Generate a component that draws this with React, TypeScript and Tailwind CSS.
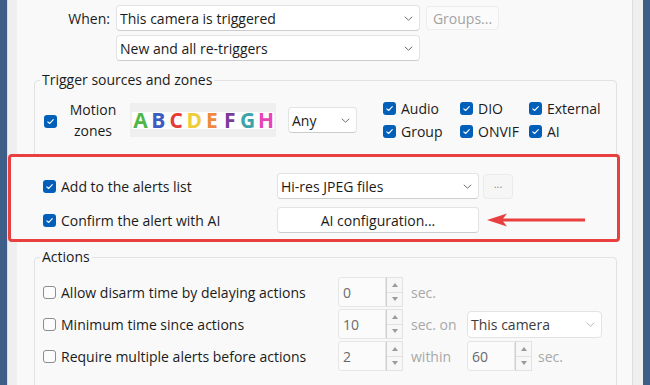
import type { ReactNode } from "react";

const FONT = { fontFamily: '"Open Sans", "Noto Sans", "Liberation Sans", sans-serif' };

const ZONES: { letter: string; color: string }[] = [
  { letter: "A", color: "text-[#4db848]" },
  { letter: "B", color: "text-[#3c5cc4]" },
  { letter: "C", color: "text-[#e53b36]" },
  { letter: "D", color: "text-[#f0cc3a]" },
  { letter: "E", color: "text-[#ee8a3e]" },
  { letter: "F", color: "text-[#7a3c99]" },
  { letter: "G", color: "text-[#3ca4a8]" },
  { letter: "H", color: "text-[#e645b8]" },
];

function Check({ checked }: { checked?: boolean }) {
  if (!checked) {
    return (
      <span className="inline-block h-[13px] w-[13px] shrink-0 rounded-[3px] border border-[#8c8c8c] bg-[#fcfcfc]" />
    );
  }
  return (
    <span className="inline-flex h-[13px] w-[13px] shrink-0 items-center justify-center rounded-[3px] bg-[#005fb8]">
      <svg width="9" height="9" viewBox="0 0 9 9" fill="none">
        <path d="M1.8 4.8 L3.6 6.5 L7.3 2.6" stroke="white" strokeWidth="1.1" strokeLinecap="round" strokeLinejoin="round" />
      </svg>
    </span>
  );
}

function Chevron({ light }: { light?: boolean }) {
  return (
    <svg width="9" height="5" viewBox="0 0 9 5" fill="none" className="shrink-0">
      <path d="M0.8 0.8 L4.5 4.2 L8.2 0.8" stroke={light ? "#b8b8b8" : "#6e6e6e"} strokeWidth="1" />
    </svg>
  );
}

function Select({ text, className, dim }: { text: string; className: string; dim?: boolean }) {
  return (
    <div
      className={`flex items-center justify-between rounded-[4px] border border-[#e3e3e3] border-b-[#cdcdcd] bg-white pl-[3px] pr-[6px] ${
        dim ? "text-[#3c3c3c] border-b-[#e3e3e3] bg-[#fbfbfb]" : ""
      } ${className}`}
    >
      <span>{text}</span>
      <Chevron light={dim} />
    </div>
  );
}

function Spin({ value, className = "" }: { value: string; className?: string }) {
  return (
    <div className={`flex h-[30px] w-[65px] ${className}`}>
      <div className="flex flex-1 items-center rounded-l-[3px] border border-[#e6e6e6] bg-[#fbfbfb] pl-[4px] text-[#6a6a6a]">
        {value}
      </div>
      <div className="flex w-[17px] flex-col border border-l-[#cfcfcf] border-[#e2e2e2] bg-[#f7f7f7]">
        <div className="flex flex-1 items-center justify-center border-b border-[#e2e2e2]">
          <svg width="6" height="4" viewBox="0 0 6 4">
            <path d="M0 4 L3 0 L6 4 Z" fill="#9a9a9a" />
          </svg>
        </div>
        <div className="flex flex-1 items-center justify-center">
          <svg width="6" height="4" viewBox="0 0 6 4">
            <path d="M0 0 L3 4 L6 0 Z" fill="#9a9a9a" />
          </svg>
        </div>
      </div>
    </div>
  );
}

function Group({ title, children, className = "" }: { title: string; children: ReactNode; className?: string }) {
  return (
    <fieldset className={`ml-[17px] w-[583px] rounded-[4px] border border-[#e2e2e2] ${className}`}>
      <legend className="ml-[5px] px-[2px] leading-[20px]">{title}</legend>
      {children}
    </fieldset>
  );
}

function CheckLabel({ text, checked, className = "" }: { text: string; checked?: boolean; className?: string }) {
  return (
    <div className={`flex items-center gap-[5px] ${className}`}>
      <Check checked={checked} />
      <span>{text}</span>
    </div>
  );
}

export default function App() {
  return (
    <div className="flex h-[385px] w-[650px] overflow-hidden bg-[#f9f9f9] text-[14px] text-[#1b1b1b]" style={FONT}>
      <div className="w-[7px] bg-[#3e5e88]" />
      <div className="w-[10px] border-l border-[#dcdcdc] bg-[#efefef]" />

      <main className="w-[615px] pt-[5px]">
        {/* when */}
        <div className="flex items-center">
          <span className="w-[93px] text-right">When:</span>
          <Select text="This camera is triggered" className="ml-[6px] h-[26px] w-[304px]" />
          <div className="ml-[6px] flex h-[24px] w-[73px] items-center justify-center rounded-[4px] border border-[#ececec] bg-[#fbfbfb] text-[#a3a3a3]">
            Groups...
          </div>
        </div>
        <Select text="New and all re-triggers" className="ml-[99px] mt-[4px] h-[26px] w-[304px]" />

        {/* trigger sources */}
        <Group title="Trigger sources and zones" className="mt-[9px] pb-[20px]">
          <div className="mt-[13px] flex h-[34px] items-center">
            <span className="ml-[9px]">
              <Check checked />
            </span>
            <div className="ml-[8px] w-[56px] text-center leading-[21px]">
              Motion
              <br />
              zones
            </div>
            <div className="ml-[9px] flex h-[34px] w-[146px] items-center bg-[#efefef] px-[2px]">
              <div className="flex h-[17px] w-full items-center justify-between bg-white px-[1px]">
                {ZONES.map((z) => (
                  <span
                    key={z.letter}
                    className={`w-[15px] text-center text-[21px] font-bold leading-none ${z.color}`}
                    style={{ fontFamily: '"Open Sans", sans-serif' }}
                  >
                    {z.letter}
                  </span>
                ))}
              </div>
            </div>
            <Select text="Any" className="ml-[12px] h-[26px] w-[69px]" />
            <div className="ml-[26px] grid grid-cols-[77px_69px_70px] leading-[23px]">
              <CheckLabel text="Audio" checked />
              <CheckLabel text="DIO" checked />
              <CheckLabel text="External" checked />
              <CheckLabel text="Group" checked />
              <CheckLabel text="ONVIF" checked />
              <CheckLabel text="AI" checked />
            </div>
          </div>
        </Group>

        {/* highlighted alerts block */}
        <div className="relative -ml-[9px] -mt-[4px] flex h-[88px] w-[612px] flex-col gap-[8px] rounded-[4px] border-[3px] border-[#e8403f] bg-[#f9f9f9] pb-[6px] pl-[32px] pt-[16px]">
          <div className="flex h-[26px] items-center">
            <CheckLabel text="Add to the alerts list" checked className="w-[234px]" />
            <Select text="Hi-res JPEG files" className="h-[26px] w-[202px]" />
            <div className="ml-[4px] flex h-[25px] w-[30px] items-center justify-center rounded-[4px] border border-[#ebebeb] bg-[#f6f6f6] pb-[4px] text-[11px] text-[#8a8a8a]">
              ...
            </div>
          </div>
          <div className="flex h-[26px] items-center">
            <CheckLabel text="Confirm the alert with AI" checked className="w-[234px]" />
            <div className="flex h-[26px] w-[202px] items-center justify-center rounded-[4px] border border-[#e3e3e3] border-b-[#cdcdcd] bg-white">
              AI configuration...
            </div>
            <svg width="98" height="14" viewBox="0 0 98 14" className="ml-[8px]">
              <path d="M0 7 L20 0.5 L15 7 L20 13.5 Z" fill="#e8403f" />
              <rect x="14" y="5.5" width="84" height="3" fill="#e8403f" />
            </svg>
          </div>
        </div>

        {/* actions */}
        <Group title="Actions" className="mt-[5px] h-[160px]">
          <div className="mt-[10px] flex flex-col gap-[2px] pl-[8px]">
            <div className="flex h-[30px] items-center">
              <CheckLabel text="Allow disarm time by delaying actions" className="w-[295px]" />
              <Spin value="0" />
              <span className="ml-[8px] text-[#a8a8a8]">sec.</span>
            </div>
            <div className="flex h-[30px] items-center">
              <CheckLabel text="Minimum time since actions" className="w-[295px]" />
              <Spin value="10" className="h-[28px]" />
              <span className="ml-[8px] w-[56px] text-[#a8a8a8]">sec. on</span>
              <Select text="This camera" dim className="h-[27px] w-[135px]" />
            </div>
            <div className="flex h-[30px] items-center">
              <CheckLabel text="Require multiple alerts before actions" className="w-[295px]" />
              <Spin value="2" />
              <span className="ml-[8px] w-[56px] text-[#a8a8a8]">within</span>
              <Spin value="60" />
              <span className="ml-[6px] text-[#a8a8a8]">sec.</span>
            </div>
          </div>
        </Group>
      </main>

      <div className="w-[11px] border-l border-[#dedede] bg-[#efefef]" />
      <div className="w-[7px] bg-[#3e5e88]" />
    </div>
  );
}
